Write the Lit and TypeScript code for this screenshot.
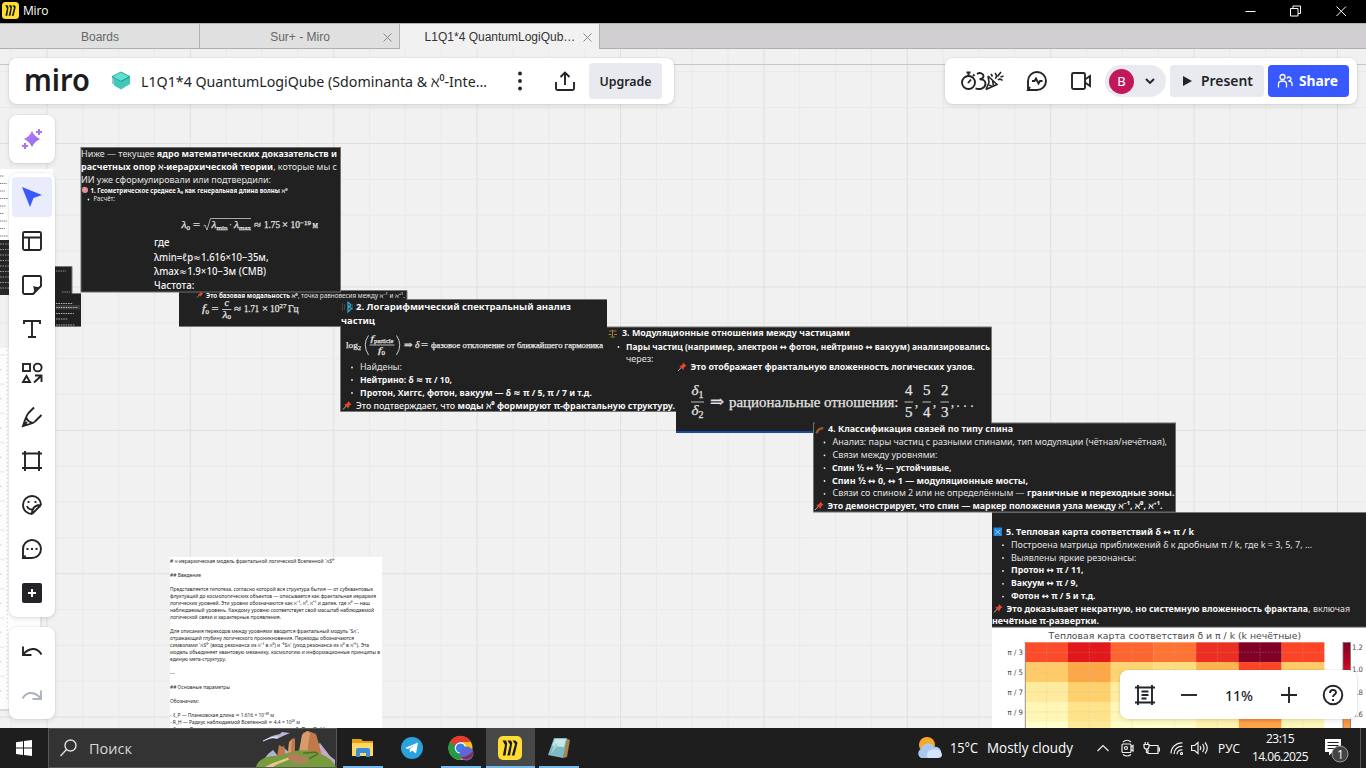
import { LitElement, html, svg, css } from "lit";
import { customElement } from "lit/decorators.js";

/** One fitted line of board text; w is the line's width on the board. */
const t = (x: number, y: number, w: number, size: number, body: unknown, cls = "") =>
  svg`<text class=${cls} x=${x} y=${y} font-size=${size} textLength=${w} lengthAdjust="spacingAndGlyphs">${body}</text>`;
const b = (s: string) => svg`<tspan class="b">${s}</tspan>`;
const card = (x: number, y: number, w: number, h: number) =>
  svg`<rect x=${x} y=${y} width=${w} height=${h} fill="#212121" stroke="#6f6f6f" stroke-width="1"/>`;
const dark = (x: number, y: number, w: number, h: number) =>
  svg`<rect x=${x} y=${y} width=${w} height=${h} fill="#212121"/>`;
const dot = (x: number, y: number) => svg`<circle cx=${x} cy=${y} r=".9" fill="#eee"/>`;
const bar = (x: number, y: number, w: number) => svg`<rect x=${x} y=${y} width=${w} height="1" fill="#bbb"/>`;
const pin = (x: number, y: number, s = 1) => svg`<g transform="translate(${x} ${y}) scale(${s})">
  <path d="M0 8.5 3.6 4.6" stroke="#b9c2c8" stroke-width=".9"/>
  <path d="M1.2 3.4 3.4 3 5 1.2 5 0 8.6 3.4 7.4 3.8 5.9 5.4 5.5 7.4Z" fill="#e8452c"/></g>`;

@customElement("board-canvas")
class BoardCanvas extends LitElement {
  static styles = css`
    :host { display: block; width: 100%; height: 100%; }
    svg { display: block; }
    text { font-family: "Noto Sans", "DejaVu Sans", sans-serif; fill: #e2e2e2; white-space: pre; }
    .b { font-weight: 700; fill: #f6f6f6; }
    .m { font-weight: 500; fill: #f2f2f2; }
    .f { font-family: "Liberation Serif", "DejaVu Serif", serif; fill: #e4e4e4; stroke: #e4e4e4; stroke-width: .25; }
    .fi { font-family: "Liberation Serif", "DejaVu Serif", serif; fill: #e4e4e4; stroke: #e4e4e4; stroke-width: .25; font-style: italic; }
    .d { fill: #1f1f1f; }
    .c { font-family: "DejaVu Sans", sans-serif; fill: #4a4a4a; }
  `;
  grid() {
    const out = [];
    for (let i = -1; i < 38; i++) {
      const x = 46.9 + i * 35.85;
      out.push(svg`<line x1=${x} x2=${x} y1="49" y2="728" stroke=${i % 4 === 0 ? "#dfdfdf" : "#e9e9e9"}/>`);
    }
    for (let i = 2; i < 21; i++) {
      const y = 0.1 + i * 35.85;
      out.push(svg`<line y1=${y} y2=${y} x1="0" x2="1366" stroke=${i % 4 === 0 ? "#dfdfdf" : "#e9e9e9"}/>`);
    }
    return out;
  }
  heat() {
    const rows = [
      ["#fd4c2a", "#e2191c", "#fd6531", "#fd7435", "#ed2e22", "#800026", "#fc4527"],
      ["#fecb68", "#fda848", "#fed572", "#fedd7f", "#feb44e", "#fc4527", "#fecb68"],
      ["#feeb9e", "#fed16e", "#feeda2", "#fff0a9", "#fee187", "#fd7435", "#feeb9e"],
      ["#fff5b5", "#fee38b", "#fff7b9", "#fff9be", "#ffee9f", "#fd8d3c", "#fff5b5"],
      ["#ffffcc", "#fee998", "#fffdc6", "#fffdc6", "#fff3b0", "#fea546", "#fff7b9"],
    ];
    return svg`
      ${rows.map((r, j) => r.map((c, i) => svg`<rect x=${1025.3 + i * 42.7} y=${642.3 + j * 19.85} width="42.9" height="20.1" fill=${c}/>`))}
      ${rows.map((_, j) => svg`<line x1="1025" x2="1324" y1=${652.3 + j * 19.85} y2=${652.3 + j * 19.85} stroke="#bbb" stroke-opacity=".5" stroke-width=".5" stroke-dasharray="2 1"/>`)}
      ${rows[0].map((_, i) => svg`<line y1="642" y2="728" x1=${1046.6 + i * 42.7} x2=${1046.6 + i * 42.7} stroke="#bbb" stroke-opacity=".5" stroke-width=".5" stroke-dasharray="2 1"/>`)}
      <line x1="1025.3" x2="1025.3" y1="642" y2="728" stroke="#777" stroke-width=".8"/>
      ${["π / 3", "π / 5", "π / 7", "π / 9"].map((s, i) => t(1007.5, 655.4 + i * 19.85, 15.5, 7.4, s, "c"))}`;
  }
  doc() {
    const L: [number, number, string][] = [
      [562.8, 165, "# ℵ-иерархическая модель фрактальной логической Вселенной `ℵS⁰`"],
      [576.8, 31, "## Введение"],
      [591, 203, "Представляется гипотеза, согласно которой вся структура бытия — от субквантовых"],
      [598, 206, "флуктуаций до космологических объектов — описывается как фрактальная иерархия"],
      [605, 200, "логических уровней. Эти уровни обозначаются как ℵ⁻¹, ℵ⁰, ℵ⁺¹ и далее, где ℵ⁰ — наш"],
      [612, 204, "наблюдаемый уровень. Каждому уровню соответствует свой масштаб наблюдаемой"],
      [619, 111, "логической связи и характерные проявления."],
      [633, 189, "Для описания переходов между уровнями вводится фрактальный модуль `Sℵ`,"],
      [640, 184, "отражающий глубину логического проникновения. Переходы обозначаются"],
      [647, 199, "символами `ℵS⁰` (вход резонанса из ℵ⁻¹ в ℵ⁰) и `⁰Sℵ` (уход резонанса из ℵ⁰ в ℵ⁺¹). Эта"],
      [654, 210, "модель объединяет квантовую механику, космологию и информационные принципы в"],
      [661, 56, "единую мета-структуру."],
      [675, 5, "---"],
      [689, 60, "## Основные параметры"],
      [703, 29, "Обозначим:"],
      [717, 104, "- ℓ_P — Планковская длина ≈ 1.616 × 10⁻³⁵ м"],
      [724, 130, "- R_H — Радиус наблюдаемой Вселенной ≈ 4.4 × 10²⁶ м"],
      [731, 155, "- λ₀ — Геометрическое среднее между ℓ_P и R_H"],
    ];
    return svg`<rect x="170" y="557" width="212" height="171" fill="#fff"/>${L.map(([y, w, s]) => t(170, y, w, 5.6, s, "d"))}`;
  }
  left() {
    const rows = Array.from({ length: 9 }, (_, i) => i);
    return svg`
      <rect x="0" y="169" width="53" height="75" fill="#fff"/>
      ${rows.map((i) => svg`<line x1="0" x2=${4 + (i * 3) % 5} y1=${176 + i * 7.5} y2=${176 + i * 7.5} stroke="#777" stroke-width="1.1" stroke-dasharray="1.3 .8"/>`)}
      <rect x="0" y="240" width="10" height="55" fill="#272727"/>
      ${rows.map((i) => svg`<line x1="0" x2="9" y1=${244 + i * 5.5} y2=${244 + i * 5.5} stroke="#999" stroke-width="1" stroke-dasharray="1.5 1"/>`)}
      <rect x="0" y="348" width="41" height="362" fill="#fdfdfd"/>
      <line x1="7.5" x2="7.5" y1="350" y2="700" stroke="#ccd" stroke-dasharray="1 3"/>
      ${Array.from({ length: 24 }, (_, i) => svg`<rect x="0" y=${354 + i * 14.6} width=${i % 2 ? 1.5 : 5} height="2" fill=${i % 2 ? "#f7dfca" : "#f4f1ea"}/>`)}
      <line x1="41" x2="41" y1="617" y2="710" stroke="#d0d0d0"/>
      <line x1="0" x2="48" y1="710" y2="710" stroke="#cfcfcf" stroke-width="1.5"/>
      ${dark(50, 266, 22, 30)} ${dark(50, 293, 31, 33.5)}
      <path d="M50 266.5H72V293.500H81M50 326.5H81" fill="none" stroke="#777"/>
      <path d="M56 271H66M62 292H70" stroke="#aaa" stroke-width=".8" stroke-dasharray="1.5 .8"/>
      <rect x="56" y="305" width="24" height="4.500" fill="#3d3d3d"/>
      <path d="M56 303.500H73M56 307.500H78M56 313.500H74M56 319H68M56 325H75" stroke="#bbb" stroke-width=".9" stroke-dasharray="1.6 .8"/>`;
  }
  render() {
    const S = 9.1;
    return html`<svg width="1366" height="679" viewBox="0 49 1366 679">
      <defs><linearGradient id="cb" x1="0" y1="0" x2="0" y2="1">
        <stop offset="0" stop-color="#800026"/><stop offset=".22" stop-color="#bd0026"/><stop offset=".36" stop-color="#e31a1c"/>
        <stop offset=".6" stop-color="#fc4e2a"/><stop offset="1" stop-color="#feae4a"/></linearGradient></defs>
      <rect x="0" y="49" width="1366" height="679" fill="#f1f1f1"/>
      ${this.grid()}
      <line x1="0" x2="1366" y1="64.500" y2="64.500" stroke="#c6c6c6"/>
      ${this.left()}

      ${dark(179, 291, 228, 36)}
      <path d="M340 290.500H407V300M179 326.500H341" fill="none" stroke="#777"/>
      ${card(81, 147.5, 259.5, 144.500)}
      ${t(81, 157.300, 256, S, svg`Ниже — текущее ${b("ядро математических доказательств и")}`)}
      ${t(81, 170, 256, S, svg`${b("расчетных опор ℵ-иерархической теории")}, которые мы с`)}
      ${t(81, 183, 190, S, "ИИ уже сформулировали или подтвердили:")}
      <path d="M82 190c0-3 2-3.500 3-3 2 0 3 1 3 3 0 2-1 3-3 3-2 0-3-1-3-3z" fill="#e8909c"/>
      ${t(90.500, 192.500, 197, 6.200, "1. Геометрическое среднее λ₀ как генеральная длина волны ℵ⁰", "b")}
      ${dot(88.500, 199.500)} ${t(93.500, 201, 21.500, 6.200, "Расчёт:")}
      ${t(181.500, 228, 5, 10, "λ", "fi")} ${t(186.500, 230, 3.500, 6.500, "0", "f")} ${t(193, 228, 7, 10, "=", "f")}
      <path d="M203.500 226l1.500-1 2 5 3.500-11.500H251" fill="none" stroke="#ccc" stroke-width=".8"/>
      ${t(211.500, 228, 5, 10, "λ", "fi")} ${t(216.500, 230, 11, 6.500, "min", "f")} ${t(229.500, 228, 2, 10, "·", "f")} ${t(234, 228, 5, 10, "λ", "fi")} ${t(239, 230, 12, 6.500, "max", "f")}
      ${t(254, 228, 7, 10, "≈", "f")} ${t(264, 228, 16, 10, "1.75", "f")} ${t(282, 228, 6, 10, "×", "f")} ${t(290.500, 228, 9.500, 10, "10", "f")} ${t(300, 224.500, 11, 6.500, "−19", "f")} ${t(312.500, 228, 5.500, 9.500, "м", "f")}
      ${t(154, 245.500, 15.500, 10.200, "где", "m")}
      ${t(154, 260.700, 114.500, 10.200, "λmin=ℓp≈1.616×10−35м,", "m")}
      ${t(154, 274.700, 112, 10.200, "λmax≈1.9×10−3м (CMB)", "m")}
      ${t(154, 288.700, 40.500, 10.200, "Частота:", "m")}
      ${pin(197, 291.500, 0.72)}
      ${t(206, 297.500, 199, 6.200, svg`${b("Это базовая модальность ℵ⁰")}, точка равновесия между ℵ⁻¹ и ℵ⁺¹.`)}
      ${t(202, 312, 3.500, 10, "f", "fi")} ${t(205.500, 314, 3.500, 6.500, "0", "f")} ${t(211.500, 312, 7, 10, "=", "f")}
      ${t(224.500, 306, 4.500, 9.500, "c", "fi")} ${bar(222, 309, 9.500)} ${t(222.500, 317.500, 5, 9.500, "λ", "fi")} ${t(227.500, 319, 3.500, 6, "0", "f")}
      ${t(234, 312, 7, 10, "≈", "f")} ${t(244, 312, 15, 10, "1.71", "f")} ${t(262, 312, 6, 10, "×", "f")} ${t(270, 312, 9.500, 10, "10", "f")} ${t(279.500, 308, 7, 6.500, "27", "f")} ${t(288, 312, 10.500, 9.500, "Гц", "f")}

      ${dark(607, 327, 385, 84)} <path d="M607 327H991.500V423" fill="none" stroke="#777"/>
      ${dark(341, 300, 266, 111)} ${dark(600, 380, 76, 31.500)}
      <path d="M340.500 327V411.500H676M407 299.500H607" fill="none" stroke="#777"/>
      <path d="M342.500 303v8M344.500 304v6M352.500 304v6" stroke="#39464b"/><path d="M348 301.500v10.500l3.500-3.500-4-3.500M348 302l3 3-3.500 4" fill="none" stroke="#2fa3c9" stroke-width="1.300"/>
      ${t(356, 310, 215, S, "2. Логарифмический спектральный анализ", "b")}
      ${t(341, 323.500, 34, S, "частиц", "b")}
      ${t(346, 348, 12, 9, "log", "f")} ${t(358, 350, 3, 6, "2", "f")}
      <path d="M368.500 335.500q-6.500 9 0 19.500M396.500 335.500q6.500 9 0 19.500" fill="none" stroke="#ddd" stroke-width=".9"/>
      ${t(370.500, 340.500, 3.500, 9, "f", "fi")} ${t(374, 342.500, 19.500, 6.500, "particle", "f")} ${bar(369.500, 344.500, 25)} ${t(378, 353, 3.500, 9, "f", "fi")} ${t(381.500, 355, 3.500, 6, "0", "f")}
      ${t(404, 348, 8.500, 9.500, "⇒", "f")} ${t(415, 348, 4.500, 9.500, "δ", "fi")} ${t(421, 348, 7, 9.500, "=", "f")} ${t(431, 348, 172, 8.800, "фазовое отклонение от ближайшего гармоника", "f")}
      ${dot(352, 367.500)} ${t(360, 370, 42, S, "Найдены:")}
      ${dot(352, 380)} ${t(360, 383, 92, S, "Нейтрино: δ ≈ π / 10,", "b")}
      ${dot(352, 393)} ${t(360, 396, 232, S, "Протон, Хиггс, фотон, вакуум — δ ≈ π / 5, π / 7 и т.д.", "b")}
      ${pin(343, 401)} ${t(356, 408.700, 319, S, svg`<tspan class="m">Это подтверждает, что </tspan>${b("моды ℵ⁰ формируют π-фрактальную структуру.")}`)}

      <path d="M612.500 329.500v7M609 331h7.500M610.500 337h4.500M608.500 334.500h3M614 334.500h3" stroke="#a07c30" stroke-width="1"/>
      ${t(622, 336, 228, S, "3. Модуляционные отношения между частицами", "b")}
      ${dot(618.500, 347)} ${t(626, 349.700, 364, S, "Пары частиц (например, электрон ↔ фотон, нейтрино ↔ вакуум) анализировались", "b")}
      ${t(626, 362, 27.500, S, "через:")}
      ${dark(676, 374, 316, 57.500)} <rect x="676" y="431" width="138" height="2" fill="#1746b0"/>
      <path d="M991.500 327V423" stroke="#777"/>
      ${pin(678, 362.500)} ${t(690.500, 370.200, 284.500, S, "Это отображает фрактальную вложенность логических узлов.", "b")}
      ${t(691.500, 395, 7, 15, "δ", "fi")} ${t(698.500, 397.500, 5, 9.500, "1", "f")} ${bar(691, 401.500, 13)} ${t(691.500, 415, 7, 15, "δ", "fi")} ${t(698.500, 418, 5, 9.500, "2", "f")}
      ${t(710, 407, 14, 16, "⇒", "f")} ${t(729, 406.500, 169.500, 14.800, "рациональные отношения:", "f")}
      ${t(905, 395, 7.500, 14.500, "4", "f")} ${bar(904.500, 401.500, 8.500)} ${t(905, 416.500, 7.500, 14.500, "5", "f")} ${t(915, 406.500, 3, 14.500, ",", "f")}
      ${t(923, 395, 7.500, 14.500, "5", "f")} ${bar(922.500, 401.500, 8.500)} ${t(923, 416.500, 7.500, 14.500, "4", "f")} ${t(933, 406.500, 3, 14.500, ",", "f")}
      ${t(941, 395, 7.500, 14.500, "2", "f")} ${bar(940.500, 401.500, 8.500)} ${t(941, 416.500, 7.500, 14.500, "3", "f")} ${t(951, 406.500, 3, 14.500, ",", "f")}
      ${[957.5, 964.5, 971.5].map((x) => t(x - 1, 406.500, 3, 14.500, ".", "f"))}

      ${card(813.500, 423, 362, 89)} ${dark(815, 421, 176, 4)}
      <path d="M815.500 433c1-4 4-6 8-6l-.5 2.500c-3 0-4.500 1.500-5 4z" fill="#a0562b"/>
      ${t(828, 432.300, 185, S, "4. Классификация связей по типу спина", "b")}
      ${[442.5, 455.3, 468.2, 481, 493.8].map((y) => dot(824.5, y))}
      ${t(832.500, 445, 334.500, S, "Анализ: пары частиц с разными спинами, тип модуляции (чётная/нечётная),")}
      ${t(832.500, 457.800, 105, S, "Связи между уровнями:")}
      ${t(832, 470.800, 119.500, S, "Спин ½ ↔ ½ — устойчивые,", "b")}
      ${t(832, 483.500, 196, S, "Спин ½ ↔ 0, ↔ 1 — модуляционные мосты,", "b")}
      ${t(832.500, 496.300, 342, S, svg`Связи со спином 2 или не определённым — ${b("граничные и переходные зоны.")}`)}
      ${pin(815, 501.500)} ${t(827.500, 509, 335, S, "Это демонстрирует, что спин — маркер положения узла между ℵ⁻¹, ℵ⁰, ℵ⁺¹.", "b")}

      <rect x="992" y="627" width="374" height="101" fill="#fff"/>
      ${dark(992, 512.500, 374, 114.500)} <path d="M1176 512.500H1366M992 627.200H1366" stroke="#777"/>
      <rect x="993.500" y="527.500" width="8.500" height="8.500" fill="#1b86dd"/><path d="M995 529.500l5.500 5M995 534.500l5.500-5" stroke="#9ed2f7"/>
      ${t(1006, 535, 188, S, "5. Тепловая карта соответствий δ ↔ π / k", "b")}
      ${[545.2, 558, 571, 583.800, 596.600].map((y) => dot(1003, y))}
      ${t(1011, 547.700, 301, S, "Построена матрица приближений δ к дробным π / k, где k = 3, 5, 7, …")}
      ${t(1011, 560.500, 125.500, S, "Выявлены яркие резонансы:")}
      ${t(1011, 573.300, 72.500, S, "Протон ↔ π / 11,", "b")}
      ${t(1011, 586.300, 67, S, "Вакуум ↔ π / 9,", "b")}
      ${t(1011, 599, 84.500, S, "Фотон ↔ π / 5 и т.д.", "b")}
      ${pin(994, 604)} ${t(1006.500, 611.700, 304, S, svg`${b("Это доказывает некратную, но системную вложенность фрактала")},`)}
      ${t(1313, 611.700, 37, S, "включая")}
      ${t(992, 624.300, 107, S, "нечётные π-развертки.", "b")}
      ${t(1048.500, 638.800, 252.500, 9.200, "Тепловая карта соответствия δ и π / k (k нечётные)", "c")}
      ${this.heat()}
      <rect x="1343" y="642.500" width="7.500" height="90" fill="url(#cb)" stroke="#777" stroke-width=".8"/>
      ${["1.2", "1.0", "0.8", "0.6"].map((s, i) => t(1352, 649.800 + i * 22.500, 11, 7.400, s, "c"))}
      ${this.doc()}
    </svg>`;
  }
}

const ico = (body: unknown) => html`<svg class="ico" width="24" height="24" viewBox="0 0 24 24">${body}</svg>`;
const tools = [
  svg`<path d="M2 2 22 10 13.500 13 10 22Z" fill="#3859ff" stroke="none"/>`,
  svg`<rect x="3" y="3" width="18" height="18" rx="1.500"/><path d="M3 8.500h18M9 8.500V21"/>`,
  svg`<path d="M13 21H4.500A1.500 1.500 0 0 1 3 19.500v-15A1.500 1.500 0 0 1 4.500 3h15A1.500 1.500 0 0 1 21 4.500V13zM13 21c2.500-1 2.500-3 1.500-6.500C18 15.500 20 15.500 21 13"/>`,
  svg`<path d="M4 7V4h16v3M12 4v16M8 20h8"/>`,
  svg`<rect x="3" y="3" width="7" height="7"/><circle cx="17.700" cy="6.500" r="3.900"/><path d="M6.500 15 10 21H3zM15 14.500h6.500V21M21 15l-7 6.500"/>`,
  svg`<path d="M14 2.500 8.500 8C6 11 5 15 3 21c6-2 10-2 12.500-5L21.500 10M6 12c1 3 3 5 6.500 6M3 21l4-4"/>`,
  svg`<path d="M5 2v20M19 2v20M2 4.500h20M2 19h20"/>`,
  svg`<path d="M21 12a9 9 0 1 0-9 9M21 12l-9 9M21 12c-5 0-9 2-9 9M7 13c1 3 3 3.500 5 3.500"/><path d="M8.500 8v2M15.500 8v2"/>`,
  svg`<path d="M3 21.500v-9A9 9 0 1 1 12 21H3.500l2-2.500"/><path d="M7.500 11v2M12 11v2M16.500 11v2" stroke-width="2"/>`,
  svg`<rect x="2" y="2" width="20" height="20" rx="2" fill="#222428" stroke="none"/><path d="M12 8v8M8 12h8" stroke="#fff"/>`,
];
const miroMark = (s: number) => html`<svg width=${s} height=${s} viewBox="0 0 24 24"><rect width="24" height="24" rx="5" fill="#ffdd33"/>
  <path d="M4.500 4.500H8L9.200 7.500 7.500 19.500H4.800L7 9zM9.500 4.500H13L14.200 7 12 19.500H9.300L12 8.500zM14.500 4.500H17.500L19.500 6.800 16.500 19.500H13.800L17 8z" fill="#1c1c1e"/></svg>`;

@customElement("app-root")
class AppRoot extends LitElement {
  static styles = css`
    :host { display: grid; grid-template-rows: 23px 26px 679px 40px; width: 1366px; height: 768px; overflow: hidden;
      font-family: "Noto Sans", sans-serif; color: #222428; white-space: nowrap; }
    * { box-sizing: border-box; }
    svg { display: block; flex: none; }
    .title { background: #000; color: #fff; display: flex; align-items: center; padding: 1px 19px 3px 2px; font: 12px "Open Sans", sans-serif; }
    .title .name { margin-left: 4px; flex: 1; letter-spacing: -.2px; }
    .tabs { display: flex; background: #d2cfd3; border-top: 1px solid #b0b0b0; border-bottom: 1px solid #b0b0b0; font: 12px "Liberation Sans", sans-serif; color: #666; }
    .tab { width: 200px; background: #e0e0e0; border-right: 1px solid #b0b0b0; display: flex; align-items: center; justify-content: center; height: 24px; position: relative; padding: 2px 0 0 1px; }
    .tab.on { background: #f1f1f1; height: 26px; color: #333; padding-bottom: 2px; }
    .tab .x { position: absolute; right: 7px; top: 9px; }
    .stage { position: relative; overflow: hidden; }
    .panel { position: absolute; background: #fff; border-radius: 8px; box-shadow: 0 0 0 1px rgba(34,36,40,.04), 0 2px 5px rgba(34,36,40,.1); display: flex; align-items: center; }
    .head { left: 9px; top: 9px; width: 665px; height: 46px; padding: 0 12px 0 16px; }
    .right { left: 945px; top: 9px; width: 412px; height: 46px; padding: 0 8px 0 16px; }
    .ai { left: 9px; top: 66px; width: 46px; height: 48px; justify-content: center; }
    .bar { left: 9px; flex-direction: column; width: 46px; padding: 4px 0; gap: 4px; }
    .tools { top: 124px; } .undo { top: 578px; }
    .zoom { left: 1120px; top: 621px; width: 237px; height: 49px; padding: 0 12px 0 13px; }
    .cell { width: 40px; height: 40px; border-radius: 4px; display: flex; align-items: center; justify-content: center; }
    .cell.on { background: #e8ecfc; }
    .ico { fill: none; stroke: #222428; stroke-width: 1.900; }
    .off .ico { stroke: #aeb2c0; }
    .hat { margin-left: 18px; }
    .board-name { width: 350px; margin-left: 10px; }
    .dots { fill: #222428; margin-left: 27px; }
    .export { margin-left: 31px; }
    .fill { fill: #222428; }
    .wordmark { font-family: "Noto Sans", sans-serif; font-weight: 600; font-size: 30px; fill: #1c1c1e; }
    .g20 { margin-left: 20px; }
    .btn { display: flex; align-items: center; background: #e9eaef; border-radius: 4px; font-weight: 600; font-size: 13px; height: 32px; }
    .upg { width: 73px; height: 36px; justify-content: center; font-size: 12.400px; margin-left: 12px; margin-right: -1px; }
    .pres { width: 94px; padding-left: 12px; gap: 9px; margin-left: 4px; }
    .share { width: 81px; padding-left: 9px; gap: 6px; background: #3859ff; margin-left: 4px; }
    .pill { width: 61px; height: 32px; border-radius: 16px; background: #e9eaef; display: flex; align-items: center; padding-left: 4px; gap: 9px; margin-left: 12px; }
    .ava { width: 25px; height: 25px; border-radius: 50%; background: #c2185b; color: #fff; font-size: 13px; display: flex; align-items: center; justify-content: center; }
    .minus { margin-left: 23px; } .pct { margin-left: 27px; } .plus { margin-left: 25px; } .help { margin-left: 23px; }
    .task { background: #1e1e1e; color: #fff; display: flex; font: 14px "Open Sans", sans-serif; align-items: stretch; }
    .start { width: 48px; display: flex; align-items: center; justify-content: center; }
    .search { width: 289px; margin-right: 1.500px; background: #333; border: 1px solid #585858; display: flex; align-items: center; padding-left: 11px; color: #d8d8d8; font-size: 14.500px; }
    .search span { margin-left: 12px; width: 168px; }
    .app { width: 49px; display: flex; align-items: center; justify-content: center; position: relative; }
    .app i { position: absolute; bottom: 0; left: 4px; width: 40px; height: 2px; background: #76b9ed; }
    .app.on { background: #484848; } .app.on i { left: 0; width: 49px; }
    .tray { display: flex; align-items: center; margin-left: auto; }
    .wx { margin-left: 5px; } .chev { margin-left: 18px; } .t12 { margin-left: 12px; } .t9 { margin-left: 9px; } .t10 { margin-left: 10px; } .t8 { margin-left: 8px; }
    .note { margin: 3px 6px 0 14px; }
    .clock { width: 60px; margin-left: 4px; text-align: center; font-size: 12px; line-height: 18px; letter-spacing: -.5px; padding-top: 0; }
    .tr { fill: none; stroke: #eee; stroke-width: 1.200; }
    .end { width: 6px; align-self: stretch; border-left: 1px solid #555; }
  `;
  x = html`<svg class="x" width="9" height="9" viewBox="0 0 9 9"><path d="M.5.5l8 8M8.500.5l-8 8" stroke="#888" fill="none"/></svg>`;
  header() {
    return html`<div class="panel head">
      <svg width="68" height="44" viewBox="0 0 68 44"><text class="wordmark" x="-1" y="31.500" textLength="66" lengthAdjust="spacingAndGlyphs">miro</text></svg>
      <svg class="hat" width="20" height="20" viewBox="0 0 20 20"><path d="M10 1 19 5.500V13L10 18.500 3 14.500V8L1 6z" fill="#40c9b9"/><path d="M1 5.500 10 1l9 4.500-9 5z" fill="#5fe0d0" stroke="#249b8f" stroke-width=".8"/><path d="M10 10.500l9-5M2 6v7" stroke="#249b8f" fill="none"/></svg>
      <svg class="board-name" width="350" height="28" viewBox="0 0 350 28"><text x="0" y="20" font-size="15" textLength="346" lengthAdjust="spacingAndGlyphs" fill="#222428">L1Q1*4 QuantumLogiQube (Sdominanta &amp; ℵ⁰-Inte…</text></svg>
      <svg class="dots" width="4" height="24" viewBox="0 0 4 24"><circle cx="2" cy="4.500" r="1.900"/><circle cx="2" cy="12" r="1.900"/><circle cx="2" cy="19.500" r="1.900"/></svg>
      <svg class="ico export" width="24" height="24" viewBox="0 0 24 24"><path d="M3 13v6.500A1.500 1.500 0 0 0 4.500 21h15a1.500 1.500 0 0 0 1.500-1.500V13M12 16V3.500M7.500 8 12 3.500 16.500 8"/></svg>
      <div class="btn upg">Upgrade</div>
    </div>
    <div class="panel right">
      <svg class="ico" width="44" height="24" viewBox="0 0 44 24"><circle cx="7.500" cy="13.500" r="6.500"/><path d="M7 14l3-3.500M7.500 7V3.500M5.500 3.500h4M12 7l1.500-1.500"/><path d="M16 5c3-2 6.500-.5 6.500 2 0 2-2 3-4 3.300 4-.3 6 1.700 6 4.500 0 4-5.500 6.500-10 4.500"/><path d="M27 7 36 15.500 25 20.500M27 7l1 6.500-3 7M31.500 11l1 6.500M28 16l4 2M30 5l1.500 2.500M34 9.500c2-1 2-3.500 0-5.500M37 11c1-1 3-1 4.500.5M36.500 7.500l3.500-4.500M39.500 8l3-1" stroke-width="1.600"/></svg>
      <svg class="ico g20" width="24" height="24" viewBox="0 0 24 24"><path d="M3 21v-9a9 9 0 1 1 9 9H3l2-3"/><path d="M7 12h2.500l1.500-2.500 2.500 5 1.500-2.500h2.500"/></svg>
      <svg class="ico g20" width="24" height="24" viewBox="0 0 24 24"><rect x="3" y="4" width="13" height="16" rx="1.500"/><path d="M16 10.500 21 7v10l-5-3.500"/></svg>
      <div class="pill"><div class="ava">B</div><svg class="ico" width="12" height="12" viewBox="-1 0 12 12"><path d="M2 4l4 4 4-4"/></svg></div>
      <div class="btn pres"><svg class="fill" width="10" height="12" viewBox="0 0 10 12"><path d="M1 1l9 5-9 5z"/></svg><svg width="56" height="24" viewBox="0 0 56 24"><text x="0" y="17" font-size="14" font-weight="600" textLength="52" lengthAdjust="spacingAndGlyphs" fill="#222428">Present</text></svg></div>
      <div class="btn share"><svg width="16" height="16" viewBox="0 0 16 16" fill="none" stroke="#fff" stroke-width="1.300"><circle cx="5.500" cy="4" r="2.500"/><path d="M1.500 14.500V11c0-2 2-3 4-3s4 1 4 3v3.500M10 5.500a2 2 0 1 1 1.500 2.500c2 0 3.500 1 3.500 3v2"/></svg><svg width="42" height="24" viewBox="0 0 42 24"><text x="0" y="17" font-size="14" font-weight="700" textLength="39" lengthAdjust="spacingAndGlyphs" fill="#fff">Share</text></svg></div>
    </div>`;
  }
  taskbar() {
    return html`<div class="task">
      <div class="start"><svg width="16" height="16" viewBox="0 0 16 16" fill="#fff"><path d="M0 2.200 7 1.200V7.600H0zM8 1.100 16 0V7.600H8zM0 8.500H7V14.900L0 13.900zM8 8.500H16V16L8 15z"/></svg></div>
      <div class="search"><svg width="17" height="18" viewBox="0 0 17 18" fill="none" stroke="#ddd" stroke-width="1.400"><circle cx="10.500" cy="6.500" r="5.500"/><path d="M6.500 10.500.5 17"/></svg><span>Поиск</span>
        <svg width="80" height="38" viewBox="0 0 80 38"><path d="M6 33 12 25l5-4 5 6 6-8 6 5 22-5 8-5 10 13 5 4v10H5z" fill="#aeb3d2"/><path d="M60 20l5-4 5 8 9 9-12-2z" fill="#caa9c4"/><path d="M21 28l2-12 4 2 1-2 2 12zM32 27l1-13 4-5 2 1v17zM42 26l3-14 2-8 5-2 8 3 3 10 3 13z" fill="#bf794a"/><path d="M46 6l5-4 3 2-3 20H43zM33 13l3-3-1 14h-3z" fill="#d99a6c"/><path d="M7 12l9-5 8-2 2-2 8 1-7 3-6 3-5-1z" fill="#b7b5dd"/><path d="M7 12l7-3 8-1" stroke="#eef" fill="none"/><path d="M0 38c2-8 12-12 25-11 8-5 22-8 33-4 9 2 18 6 22 15z" fill="#789b3e"/><path d="M9 38c8-5 15-6 24-10l4 1c-8 4-15 5-20 9z" fill="#e4c790"/><path d="M47 24c8 0 12-2 14 0s-5 3-8 6" stroke="#52722b" stroke-width="1.500" fill="none"/><path d="M31 26l9-2 4 5-1 4-10-2zM43 28l7 0 2 6-8 0zM38 31l6-1 2 4-7 1z" fill="#b87b5b"/></svg>
      </div>
      <div class="app"><svg width="24" height="20" viewBox="0 0 24 20"><path d="M1 1h9l2 2h10v15H1z" fill="#e0a211"/><path d="M1 5h21v13H1z" fill="#ffd768"/><path d="M5 18v-6a2 2 0 0 1 2-2h10a2 2 0 0 1 2 2v7h-4v-4H9v4H5z" fill="#3a90d6"/></svg><i></i></div>
      <div class="app"><svg width="22" height="22" viewBox="0 0 22 22"><circle cx="11" cy="11" r="11" fill="#2aa2dc"/><path d="M4 11 17 5.500 15 16.500l-4-3-2 2-.5-3.500L14 8l-7 4z" fill="#fff"/></svg></div>
      <div class="app"><svg width="26" height="26" viewBox="0 0 26 26"><circle cx="12.500" cy="13" r="12" fill="#fbc116"/><path d="M2 7a12 12 0 0 1 21 0H12.500L9 17z" fill="#e33b2e"/><path d="M2 7a12 12 0 0 0 10.500 18l4-9z" fill="#249a49"/><circle cx="12.500" cy="13" r="5.800" fill="#fff"/><circle cx="12.500" cy="13" r="4.600" fill="#3d7ff0"/><circle cx="18.500" cy="18.500" r="7" fill="#6267d8"/><path d="M13 22c5 0 8-2 12-6a7 7 0 0 1-12 6z" fill="#8e2c4c"/></svg><i></i></div>
      <div class="app on">${miroMark(24)}<i></i></div>
      <div class="app"><svg width="24" height="22" viewBox="0 0 24 22"><path d="M18 1l5 2-3 17-4 1z" fill="#a78350"/><path d="M7 1h13l-4 20L1 18z" fill="#7fb9c3"/><path d="M8 2h11l-2 8L5 9z" fill="#c8e7e8"/><path d="M8 6 4 17l7-9z" fill="#a3d8df"/></svg><i></i></div>
      <div class="tray">
        <svg width="28" height="26" viewBox="0 0 28 26"><circle cx="11" cy="10" r="8" fill="#f9a825"/><path d="M5 23a5 5 0 0 1 0-9 7 7 0 0 1 13-2 5.500 5.500 0 0 1 3 11z" fill="#a9c8f0"/><path d="M12 23a5 5 0 0 1 3-8c6-2 11 1 11 5 0 2-2 3-4 3z" fill="#d4e5fb"/></svg>
        <svg class="wx" width="130" height="26" viewBox="0 0 130 26"><text x="1" y="18" font-size="14" textLength="28" lengthAdjust="spacingAndGlyphs" fill="#fff">15°C</text><text x="38" y="18" font-size="14" textLength="86" lengthAdjust="spacingAndGlyphs" fill="#fff">Mostly cloudy</text></svg>
        <svg class="tr chev" width="12" height="8" viewBox="0 0 12 8"><path d="M.5 7 6 1.500 11.500 7"/></svg>
        <svg class="tr t12" width="13" height="18" viewBox="0 0 13 18"><path d="M2 3q4-3.500 8 0M2 15.500q4 3 8 0M10 8l2-1.500v5.500l-2-1.500"/><rect x="1" y="5" width="9" height="8.500" rx="1"/><circle cx="5" cy="9" r="1.500"/></svg>
        <svg class="tr t9" width="17" height="14" viewBox="0 0 17 14"><path d="M6 4.500h9v8H5v-4M15 7h1.500v3H15M1 3.500h5v2a2 2 0 0 1-5 0zM2.200 3.500V1M4.800 3.500V1M3.500 8v3.500H5"/></svg>
        <svg class="tr t10" width="13" height="13" viewBox="0 0 13 13"><path d="M1 11.500A10.500 10.500 0 0 1 12.500 1M4 12a7.500 7.500 0 0 1 8.500-7.500M7 12.300a4.500 4.500 0 0 1 5.500-4.300"/><circle cx="11.500" cy="11.500" r="1"/></svg>
        <svg class="tr t8" width="18" height="14" viewBox="0 0 18 14"><path d="M.6 4.500h3L7 1.500v11l-3.400-3h-3zM9 5q1.500 2 0 4M11.500 3q3 4 0 8M14 1.500q4.500 5.500 0 11"/></svg>
        <svg class="t9" width="28" height="26" viewBox="0 0 28 26"><text x="0" y="18" font-size="13.500" textLength="22" lengthAdjust="spacingAndGlyphs" fill="#fff">РУС</text></svg>
        <div class="clock">23:15<br>14.06.2025</div>
        <svg class="note" width="30" height="26" viewBox="0 0 30 26"><path d="M1 2h16v13H8.500L5 18.500V15H1z" fill="#fff"/><path d="M3.500 5.500h11M3.500 8.500h11M3.500 11.500h7" stroke="#1e1e1e"/><circle cx="16" cy="17" r="8" fill="#444" stroke="#999"/><text x="13" y="21.500" font-size="12" fill="#fff">1</text></svg>
        <div class="end"></div>
      </div>
    </div>`;
  }
  render() {
    return html`
      <div class="title">${miroMark(17)}<span class="name">Miro</span>
        <svg width="102" height="14" viewBox="0 0 102 14" fill="none" stroke="#fff"><path d="M.5 7.500h10M45.500 4.500h7.500v7.500h-7.500zM48 4.500V2h7.500v7.500H53M91.500 2.500l9.500 9.500M101 2.500 91.500 12"/></svg></div>
      <div class="tabs"><div class="tab">Boards</div><div class="tab">Sur+ - Miro${this.x}</div><div class="tab on">L1Q1*4 QuantumLogiQub…${this.x}</div></div>
      <div class="stage">
        <board-canvas></board-canvas>
        ${this.header()}
        <div class="panel ai"><svg width="24" height="24" viewBox="0 0 24 24"><defs><linearGradient id="g" x1="0" x2="1" y1="0" y2="1"><stop offset="0" stop-color="#c07cf5"/><stop offset="1" stop-color="#8a6cf0"/></linearGradient></defs><path d="M12 4q2.500 5.500 8 8-5.500 2.500-8 8-2.500-5.500-8-8 5.500-2.500 8-8z" fill="url(#g)"/><path d="M19 2v6M16 5h6M5 16v6M2 19h6" stroke="#a974f2" stroke-width="2"/></svg></div>
        <div class="panel bar tools">${tools.map((p, i) => html`<div class="cell ${i === 0 ? "on" : ""}">${ico(p)}</div>`)}</div>
        <div class="panel bar undo"><div class="cell">${ico(svg`<path d="M3 7.500V16h8.500M3 15.500C9 9 16.500 7.500 21.500 15.500"/>`)}</div>
          <div class="cell off">${ico(svg`<path d="M21 7.500V16h-8.500M21 15.500C15 9 7.500 7.500 2.500 15.500"/>`)}</div></div>
        <div class="panel zoom">
          ${ico(svg`<path d="M5 2v20M19 2v20M2 4.500h20M2 19.500h20M8.500 8.500h7M8.500 12h7M8.500 15.500h5"/>`)}
          <svg class="ico minus" width="18" height="18" viewBox="0 0 18 18"><path d="M1 9h16"/></svg>
          <svg class="pct" width="30" height="26" viewBox="0 0 30 26"><text x="0" y="19" font-size="14" font-weight="500" textLength="28" lengthAdjust="spacingAndGlyphs" fill="#222428">11%</text></svg>
          <svg class="ico plus" width="18" height="18" viewBox="0 0 18 18"><path d="M1 9h16M9 1v16"/></svg>
          <svg class="ico help" width="24" height="24" viewBox="0 0 24 24"><circle cx="12" cy="12" r="9.300"/><path d="M9 10c0-4 6-4 6-.5 0 2-3 2-3 4.500M12 16v2"/></svg>
        </div>
      </div>
      ${this.taskbar()}`;
  }
}
